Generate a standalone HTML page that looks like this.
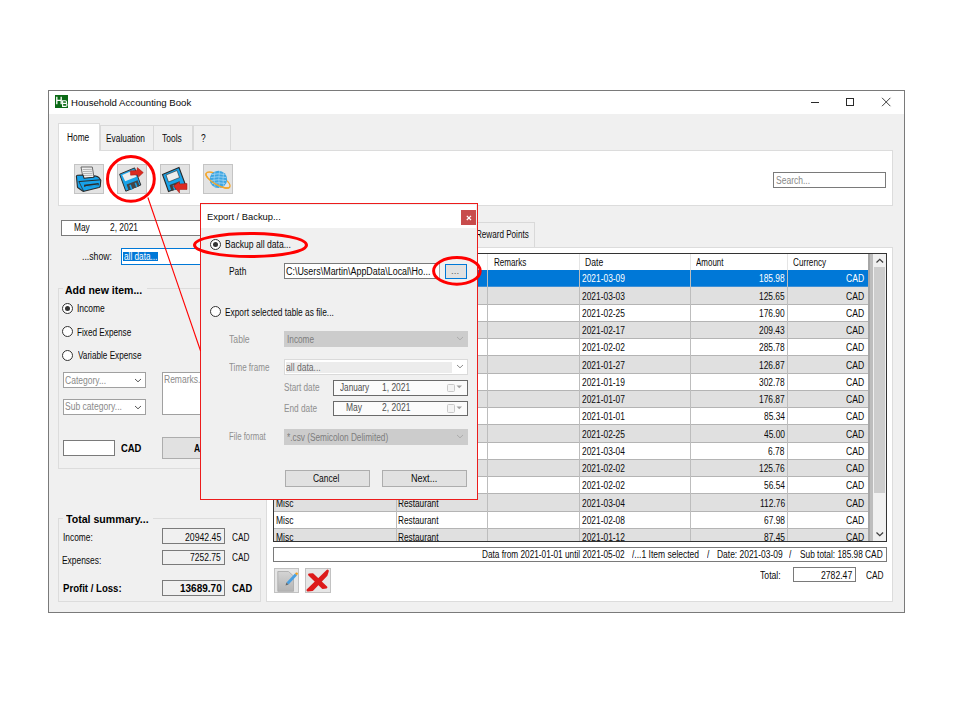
<!DOCTYPE html>
<html><head><meta charset="utf-8">
<style>
*{box-sizing:border-box;margin:0;padding:0}
html,body{width:960px;height:720px;background:#fff;overflow:hidden;position:relative;font-family:"Liberation Sans",sans-serif;color:#000}
.a{position:absolute}
.t{position:absolute;white-space:pre;color:#1a1a1a}
#win{left:48px;top:90px;width:857px;height:523px;border:1px solid #7a7a7a;background:#f0f0f0}
#tb{left:49px;top:91px;width:855px;height:23px;background:#fff}
.tab{position:absolute;background:#f0f0f0;border:1px solid #d9d9d9;border-bottom:none}
.btn{position:absolute;background:#e1e1e1;border:1px solid #adadad}
.inp{position:absolute;background:#fff;border:1px solid #7a7a7a}
.grp{position:absolute;border:1px solid #dcdcdc}
.radio{position:absolute;width:11px;height:11px;border:1px solid #333;border-radius:50%;background:#fff}
.radio.on::after{content:"";position:absolute;left:2px;top:2px;width:5px;height:5px;border-radius:50%;background:#333}
.row{position:absolute;left:274px;width:594px;height:17.25px;border-bottom:1px solid #a0a0a0}
.gl{position:absolute;width:1px;background:#a0a0a0}
</style></head><body>
<div id="win" class="a"></div>
<div id="tb" class="a"></div>
<!-- title icon -->
<div class="a" style="left:55px;top:95px;width:13px;height:13px;background:#0b6a16"></div>
<svg class="a" style="left:55px;top:95px" width="13" height="13" viewBox="0 0 13 13">
<path d="M1.8 1.8V9.2M1.8 5.3H6.2M6.2 1.8V9.2" stroke="#fff" stroke-width="1.3" fill="none"/>
<path d="M7.6 5.8H10.2Q11.6 5.8 11.6 7.2Q11.6 8.4 10.2 8.4H7.6ZM7.6 8.4H10.4Q12 8.4 12 9.9Q12 11.4 10.4 11.4H7.6Z" stroke="#fff" stroke-width="1.1" fill="none"/>
</svg>
<!-- window controls -->
<div class="a" style="left:810.8px;top:101.5px;width:8px;height:1px;background:#2a2a2a"></div>
<div class="a" style="left:845.8px;top:97.8px;width:8.2px;height:8.2px;border:1px solid #2a2a2a"></div>
<svg class="a" style="left:881px;top:97px" width="11" height="11"><path d="M1 0.8L9.4 9.2M9.4 0.8L1 9.2" stroke="#2a2a2a" stroke-width="0.9"/></svg>

<!-- top tabs -->
<div class="a" style="left:58.3px;top:150px;width:835px;height:56px;background:#fff;border:1px solid #dcdcdc"></div>
<div class="tab" style="left:100px;top:124.8px;width:53.5px;height:25.6px"></div>
<div class="tab" style="left:153px;top:124.8px;width:40px;height:25.6px"></div>
<div class="tab" style="left:192.5px;top:124.8px;width:38px;height:25.6px"></div>
<div class="tab" style="left:58.3px;top:123.3px;width:42.2px;height:28px;background:#fff;border-color:#dcdcdc"></div>

<!-- tool buttons -->
<div class="btn" style="left:74px;top:164px;width:30px;height:30px;border-color:#c4c4c4;background:#e3e3e3"></div>
<div class="btn" style="left:117px;top:164px;width:30px;height:30px;border-color:#c4c4c4;background:#e3e3e3"></div>
<div class="btn" style="left:160px;top:164px;width:30px;height:30px;border-color:#c4c4c4;background:#e3e3e3"></div>
<div class="btn" style="left:203px;top:164px;width:30px;height:30px;border-color:#c4c4c4;background:#e3e3e3"></div>
<!-- printer -->
<svg class="a" style="left:74px;top:164px" width="30" height="30" viewBox="0 0 30 30">
<path d="M7 3L18.3 3L20 13.6L9.2 14.7Z" fill="#f2f2f2" stroke="#5a5a5a" stroke-width="0.9"/>
<path d="M8.6 5.5L17.8 5.3M8.9 7.5L18.1 7.3M9.2 9.5L18.4 9.3M9.5 11.5L18.7 11.3" stroke="#a0a0a0" stroke-width="0.8"/>
<path d="M2.4 12.2Q2.5 11.3 3.5 11.2L9 11L10 14.2L19.8 13.2L20.6 11.8L23.5 12.6Q25 13 26.8 16.3L26.2 22.5Q26 23.2 25 23.5L10 27.3Q9.2 27.5 8.6 27L4 23.8Q3.5 23.4 3.4 22.6Z" fill="#17a2ea" stroke="#2b2b2b" stroke-width="1.1" stroke-linejoin="round"/>
<path d="M4.6 17.6L26.6 15.8" stroke="#2b2b2b" stroke-width="1"/>
<path d="M5 17.8L9.6 27.2" stroke="#2b2b2b" stroke-width="0.8"/>
<path d="M10 20.8L24.6 19L24.8 21.2L10.3 23.1Z" fill="#2b2b2b"/>
<path d="M11.3 22.2L23.8 20.6L23.9 21.6L11.5 23.2Z" fill="#17a2ea"/>
</svg>
<!-- export floppy -->
<svg class="a" style="left:117px;top:164px" width="30" height="30" viewBox="0 0 30 30">
<path d="M2.6 10.2L17.6 3.9L23.8 21L8.8 27.2Z" fill="#1aa3e8" stroke="#2f2f2f" stroke-width="1" stroke-linejoin="round"/>
<path d="M5.2 11L15.8 6.6L19.6 12.7L8.2 17.2Z" fill="#ececec"/>
<path d="M9.6 20.6L20.6 16.2L22.6 22L11.6 26.3Z" fill="#454545"/>
<path d="M12.3 21.2L13.8 20.6L15.6 25.4L14.1 26Z" fill="#1aa3e8"/>
<path d="M17.6 19L19 18.4L20.5 22.6L19.1 23.2Z" fill="#1aa3e8"/>
<path d="M13.2 6.8L20 6.6L20.3 3.6L26.3 8.6L21.6 12.9L21 10.8L13.6 11.2Z" fill="#dc2a20" stroke="#a51b14" stroke-width="0.5" stroke-linejoin="round"/>
</svg>
<!-- import floppy -->
<svg class="a" style="left:160px;top:164px" width="30" height="30" viewBox="0 0 30 30">
<path d="M2.5 10.5L19 3.5L25.5 21L8.5 27.5Z" fill="#1aa3e8" stroke="#2a2a2a" stroke-width="1.1"/>
<path d="M6 11L17 6.5L19.5 13.5L8.5 18Z" fill="#ededed" stroke="#2a2a2a" stroke-width="0.6"/>
<path d="M9.5 21L19 17.5L21 24L11.5 27Z" fill="#404040"/>
<path d="M12.5 21.5L14 21L15.5 25.5L14 26Z" fill="#1aa3e8"/>
<path d="M13.5 22L19.5 17.5L19.5 20L27 19.5L27 25.5L19.5 25.5L19.5 29Z" fill="#dd2a22" stroke="#9a1a14" stroke-width="0.5"/>
</svg>
<!-- globe -->
<svg class="a" style="left:203px;top:164px" width="30" height="30" viewBox="0 0 30 30">
<g transform="translate(15 16) rotate(30)"><ellipse cx="0" cy="0" rx="13.6" ry="4.8" fill="none" stroke="#f4a62a" stroke-width="1.3"/></g>
<circle cx="15.4" cy="15.4" r="8.7" fill="#3ea6e2"/>
<path d="M9 10.5Q15.4 9 21.5 10.5M7.8 13.5Q15.4 12 23 13.5M7.8 16.5Q15.4 15 23 16.5M8.8 19.5Q15.4 18 22 19.5" stroke="#a8d8f4" stroke-width="0.8" fill="none"/>
<path d="M12 7.5Q10 15.4 12 23M16.5 6.8Q15 15.4 16.5 24M20.5 8.5Q19.5 15.4 20.5 22" stroke="#a8d8f4" stroke-width="0.6" fill="none"/>
<g transform="translate(15 16) rotate(30)"><path d="M-13.6 0A13.6 4.8 0 0 0 13.6 0" fill="none" stroke="#f4a62a" stroke-width="1.3"/></g>
</svg>

<!-- search -->
<div class="inp" style="left:773px;top:172px;width:113px;height:16px;border-color:#7a7a7a"></div>

<!-- date -->
<div class="inp" style="left:61px;top:220px;width:160px;height:16px"></div>
<div class="inp" style="left:121px;top:248px;width:100px;height:17px;border-color:#0078d7"></div>
<div class="a" style="left:123px;top:251.5px;width:35px;height:9.5px;background:#0078d7"></div>

<!-- add new item group -->
<div class="grp" style="left:58px;top:288px;width:210px;height:181px"></div>
<div class="a" style="left:63px;top:284px;width:84px;height:10px;background:#f0f0f0"></div>
<div class="radio on" style="left:62.2px;top:302.9px"></div>
<div class="radio" style="left:62.2px;top:326.2px"></div>
<div class="radio" style="left:62.2px;top:350.1px"></div>
<div class="inp" style="left:63px;top:372px;width:83px;height:16px;border-color:#a0a0a0"></div>
<svg class="a" style="left:134.4px;top:377.8px" width="8" height="5"><path d="M1 1L4 3.8L7 1" fill="none" stroke="#444" stroke-width="0.9"/></svg>
<div class="inp" style="left:63px;top:399px;width:83px;height:16px;border-color:#a0a0a0"></div>
<svg class="a" style="left:134.4px;top:404.8px" width="8" height="5"><path d="M1 1L4 3.8L7 1" fill="none" stroke="#444" stroke-width="0.9"/></svg>
<div class="inp" style="left:162px;top:372px;width:80px;height:43px;border-color:#a0a0a0"></div>
<div class="inp" style="left:63px;top:440px;width:52px;height:16px"></div>
<div class="btn" style="left:162px;top:437px;width:80px;height:22px"></div>

<!-- total summary group -->
<div class="grp" style="left:58px;top:518px;width:202.8px;height:83.5px"></div>
<div class="a" style="left:63px;top:514px;width:90px;height:10px;background:#f0f0f0"></div>
<div class="inp" style="left:161.5px;top:528px;width:63px;height:16px;background:#f0f0f0"></div>
<div class="inp" style="left:161.5px;top:549.5px;width:63px;height:15px;background:#f0f0f0"></div>
<div class="inp" style="left:161.5px;top:580px;width:63px;height:16px;background:#f0f0f0"></div>

<!-- right tab control -->
<div class="a" style="left:265.5px;top:247px;width:627.5px;height:355px;background:#fff;border:1px solid #dcdcdc"></div>
<div class="tab" style="left:440px;top:222px;width:95px;height:25px"></div>

<!-- table -->
<div id="table" class="a" style="left:273px;top:253px;width:614px;height:288.5px;border:1px solid #333;background:#fff;overflow:hidden"></div>
<div class="a" style="left:274px;top:254.0px;width:594.1px;height:286.5px;overflow:hidden">
<div class="a" style="left:0;top:0;width:594.1px;height:16.0px;background:#fff"></div>
<div class="a" style="left:122.0px;top:0;width:1px;height:16.0px;background:#e5e5e5"></div>
<div class="a" style="left:213.0px;top:0;width:1px;height:16.0px;background:#e5e5e5"></div>
<div class="a" style="left:305.20000000000005px;top:0;width:1px;height:16.0px;background:#e5e5e5"></div>
<div class="a" style="left:415.79999999999995px;top:0;width:1px;height:16.0px;background:#e5e5e5"></div>
<div class="a" style="left:513.2px;top:0;width:1px;height:16.0px;background:#e5e5e5"></div>
<div class="a" style="left:0;top:16.0px;width:594.1px;height:17.25px;background:#0078d7;border-bottom:1px solid #3d8fd6"></div>
<div class="a" style="left:122.0px;top:16.0px;width:1px;height:17.25px;background:#bdbdbd"></div>
<div class="a" style="left:213.0px;top:16.0px;width:1px;height:17.25px;background:#bdbdbd"></div>
<div class="a" style="left:305.20000000000005px;top:16.0px;width:1px;height:17.25px;background:#bdbdbd"></div>
<div class="a" style="left:415.79999999999995px;top:16.0px;width:1px;height:17.25px;background:#bdbdbd"></div>
<div class="a" style="left:513.2px;top:16.0px;width:1px;height:17.25px;background:#bdbdbd"></div>
<div class="a" style="left:0;top:33.25px;width:594.1px;height:17.25px;background:#e0e0e0;border-bottom:1px solid #b4b4b4"></div>
<div class="a" style="left:122.0px;top:33.25px;width:1px;height:17.25px;background:#bdbdbd"></div>
<div class="a" style="left:213.0px;top:33.25px;width:1px;height:17.25px;background:#bdbdbd"></div>
<div class="a" style="left:305.20000000000005px;top:33.25px;width:1px;height:17.25px;background:#bdbdbd"></div>
<div class="a" style="left:415.79999999999995px;top:33.25px;width:1px;height:17.25px;background:#bdbdbd"></div>
<div class="a" style="left:513.2px;top:33.25px;width:1px;height:17.25px;background:#bdbdbd"></div>
<div class="a" style="left:0;top:50.5px;width:594.1px;height:17.25px;background:#fff;border-bottom:1px solid #b4b4b4"></div>
<div class="a" style="left:122.0px;top:50.5px;width:1px;height:17.25px;background:#bdbdbd"></div>
<div class="a" style="left:213.0px;top:50.5px;width:1px;height:17.25px;background:#bdbdbd"></div>
<div class="a" style="left:305.20000000000005px;top:50.5px;width:1px;height:17.25px;background:#bdbdbd"></div>
<div class="a" style="left:415.79999999999995px;top:50.5px;width:1px;height:17.25px;background:#bdbdbd"></div>
<div class="a" style="left:513.2px;top:50.5px;width:1px;height:17.25px;background:#bdbdbd"></div>
<div class="a" style="left:0;top:67.75px;width:594.1px;height:17.25px;background:#e0e0e0;border-bottom:1px solid #b4b4b4"></div>
<div class="a" style="left:122.0px;top:67.75px;width:1px;height:17.25px;background:#bdbdbd"></div>
<div class="a" style="left:213.0px;top:67.75px;width:1px;height:17.25px;background:#bdbdbd"></div>
<div class="a" style="left:305.20000000000005px;top:67.75px;width:1px;height:17.25px;background:#bdbdbd"></div>
<div class="a" style="left:415.79999999999995px;top:67.75px;width:1px;height:17.25px;background:#bdbdbd"></div>
<div class="a" style="left:513.2px;top:67.75px;width:1px;height:17.25px;background:#bdbdbd"></div>
<div class="a" style="left:0;top:85.0px;width:594.1px;height:17.25px;background:#fff;border-bottom:1px solid #b4b4b4"></div>
<div class="a" style="left:122.0px;top:85.0px;width:1px;height:17.25px;background:#bdbdbd"></div>
<div class="a" style="left:213.0px;top:85.0px;width:1px;height:17.25px;background:#bdbdbd"></div>
<div class="a" style="left:305.20000000000005px;top:85.0px;width:1px;height:17.25px;background:#bdbdbd"></div>
<div class="a" style="left:415.79999999999995px;top:85.0px;width:1px;height:17.25px;background:#bdbdbd"></div>
<div class="a" style="left:513.2px;top:85.0px;width:1px;height:17.25px;background:#bdbdbd"></div>
<div class="a" style="left:0;top:102.25px;width:594.1px;height:17.25px;background:#e0e0e0;border-bottom:1px solid #b4b4b4"></div>
<div class="a" style="left:122.0px;top:102.25px;width:1px;height:17.25px;background:#bdbdbd"></div>
<div class="a" style="left:213.0px;top:102.25px;width:1px;height:17.25px;background:#bdbdbd"></div>
<div class="a" style="left:305.20000000000005px;top:102.25px;width:1px;height:17.25px;background:#bdbdbd"></div>
<div class="a" style="left:415.79999999999995px;top:102.25px;width:1px;height:17.25px;background:#bdbdbd"></div>
<div class="a" style="left:513.2px;top:102.25px;width:1px;height:17.25px;background:#bdbdbd"></div>
<div class="a" style="left:0;top:119.5px;width:594.1px;height:17.25px;background:#fff;border-bottom:1px solid #b4b4b4"></div>
<div class="a" style="left:122.0px;top:119.5px;width:1px;height:17.25px;background:#bdbdbd"></div>
<div class="a" style="left:213.0px;top:119.5px;width:1px;height:17.25px;background:#bdbdbd"></div>
<div class="a" style="left:305.20000000000005px;top:119.5px;width:1px;height:17.25px;background:#bdbdbd"></div>
<div class="a" style="left:415.79999999999995px;top:119.5px;width:1px;height:17.25px;background:#bdbdbd"></div>
<div class="a" style="left:513.2px;top:119.5px;width:1px;height:17.25px;background:#bdbdbd"></div>
<div class="a" style="left:0;top:136.75px;width:594.1px;height:17.25px;background:#e0e0e0;border-bottom:1px solid #b4b4b4"></div>
<div class="a" style="left:122.0px;top:136.75px;width:1px;height:17.25px;background:#bdbdbd"></div>
<div class="a" style="left:213.0px;top:136.75px;width:1px;height:17.25px;background:#bdbdbd"></div>
<div class="a" style="left:305.20000000000005px;top:136.75px;width:1px;height:17.25px;background:#bdbdbd"></div>
<div class="a" style="left:415.79999999999995px;top:136.75px;width:1px;height:17.25px;background:#bdbdbd"></div>
<div class="a" style="left:513.2px;top:136.75px;width:1px;height:17.25px;background:#bdbdbd"></div>
<div class="a" style="left:0;top:154.0px;width:594.1px;height:17.25px;background:#fff;border-bottom:1px solid #b4b4b4"></div>
<div class="a" style="left:122.0px;top:154.0px;width:1px;height:17.25px;background:#bdbdbd"></div>
<div class="a" style="left:213.0px;top:154.0px;width:1px;height:17.25px;background:#bdbdbd"></div>
<div class="a" style="left:305.20000000000005px;top:154.0px;width:1px;height:17.25px;background:#bdbdbd"></div>
<div class="a" style="left:415.79999999999995px;top:154.0px;width:1px;height:17.25px;background:#bdbdbd"></div>
<div class="a" style="left:513.2px;top:154.0px;width:1px;height:17.25px;background:#bdbdbd"></div>
<div class="a" style="left:0;top:171.25px;width:594.1px;height:17.25px;background:#e0e0e0;border-bottom:1px solid #b4b4b4"></div>
<div class="a" style="left:122.0px;top:171.25px;width:1px;height:17.25px;background:#bdbdbd"></div>
<div class="a" style="left:213.0px;top:171.25px;width:1px;height:17.25px;background:#bdbdbd"></div>
<div class="a" style="left:305.20000000000005px;top:171.25px;width:1px;height:17.25px;background:#bdbdbd"></div>
<div class="a" style="left:415.79999999999995px;top:171.25px;width:1px;height:17.25px;background:#bdbdbd"></div>
<div class="a" style="left:513.2px;top:171.25px;width:1px;height:17.25px;background:#bdbdbd"></div>
<div class="a" style="left:0;top:188.5px;width:594.1px;height:17.25px;background:#fff;border-bottom:1px solid #b4b4b4"></div>
<div class="a" style="left:122.0px;top:188.5px;width:1px;height:17.25px;background:#bdbdbd"></div>
<div class="a" style="left:213.0px;top:188.5px;width:1px;height:17.25px;background:#bdbdbd"></div>
<div class="a" style="left:305.20000000000005px;top:188.5px;width:1px;height:17.25px;background:#bdbdbd"></div>
<div class="a" style="left:415.79999999999995px;top:188.5px;width:1px;height:17.25px;background:#bdbdbd"></div>
<div class="a" style="left:513.2px;top:188.5px;width:1px;height:17.25px;background:#bdbdbd"></div>
<div class="a" style="left:0;top:205.75px;width:594.1px;height:17.25px;background:#e0e0e0;border-bottom:1px solid #b4b4b4"></div>
<div class="a" style="left:122.0px;top:205.75px;width:1px;height:17.25px;background:#bdbdbd"></div>
<div class="a" style="left:213.0px;top:205.75px;width:1px;height:17.25px;background:#bdbdbd"></div>
<div class="a" style="left:305.20000000000005px;top:205.75px;width:1px;height:17.25px;background:#bdbdbd"></div>
<div class="a" style="left:415.79999999999995px;top:205.75px;width:1px;height:17.25px;background:#bdbdbd"></div>
<div class="a" style="left:513.2px;top:205.75px;width:1px;height:17.25px;background:#bdbdbd"></div>
<div class="a" style="left:0;top:223.0px;width:594.1px;height:17.25px;background:#fff;border-bottom:1px solid #b4b4b4"></div>
<div class="a" style="left:122.0px;top:223.0px;width:1px;height:17.25px;background:#bdbdbd"></div>
<div class="a" style="left:213.0px;top:223.0px;width:1px;height:17.25px;background:#bdbdbd"></div>
<div class="a" style="left:305.20000000000005px;top:223.0px;width:1px;height:17.25px;background:#bdbdbd"></div>
<div class="a" style="left:415.79999999999995px;top:223.0px;width:1px;height:17.25px;background:#bdbdbd"></div>
<div class="a" style="left:513.2px;top:223.0px;width:1px;height:17.25px;background:#bdbdbd"></div>
<div class="a" style="left:0;top:240.25px;width:594.1px;height:17.25px;background:#e0e0e0;border-bottom:1px solid #b4b4b4"></div>
<div class="a" style="left:122.0px;top:240.25px;width:1px;height:17.25px;background:#bdbdbd"></div>
<div class="a" style="left:213.0px;top:240.25px;width:1px;height:17.25px;background:#bdbdbd"></div>
<div class="a" style="left:305.20000000000005px;top:240.25px;width:1px;height:17.25px;background:#bdbdbd"></div>
<div class="a" style="left:415.79999999999995px;top:240.25px;width:1px;height:17.25px;background:#bdbdbd"></div>
<div class="a" style="left:513.2px;top:240.25px;width:1px;height:17.25px;background:#bdbdbd"></div>
<div class="a" style="left:0;top:257.5px;width:594.1px;height:17.25px;background:#fff;border-bottom:1px solid #b4b4b4"></div>
<div class="a" style="left:122.0px;top:257.5px;width:1px;height:17.25px;background:#bdbdbd"></div>
<div class="a" style="left:213.0px;top:257.5px;width:1px;height:17.25px;background:#bdbdbd"></div>
<div class="a" style="left:305.20000000000005px;top:257.5px;width:1px;height:17.25px;background:#bdbdbd"></div>
<div class="a" style="left:415.79999999999995px;top:257.5px;width:1px;height:17.25px;background:#bdbdbd"></div>
<div class="a" style="left:513.2px;top:257.5px;width:1px;height:17.25px;background:#bdbdbd"></div>
<div class="a" style="left:0;top:274.75px;width:594.1px;height:17.25px;background:#e0e0e0;border-bottom:1px solid #b4b4b4"></div>
<div class="a" style="left:122.0px;top:274.75px;width:1px;height:17.25px;background:#bdbdbd"></div>
<div class="a" style="left:213.0px;top:274.75px;width:1px;height:17.25px;background:#bdbdbd"></div>
<div class="a" style="left:305.20000000000005px;top:274.75px;width:1px;height:17.25px;background:#bdbdbd"></div>
<div class="a" style="left:415.79999999999995px;top:274.75px;width:1px;height:17.25px;background:#bdbdbd"></div>
<div class="a" style="left:513.2px;top:274.75px;width:1px;height:17.25px;background:#bdbdbd"></div>
<div class="t" style="left:308.08px;top:20.40px;font-size:10px;line-height:10px;color:#ffffff;transform:scaleX(0.8398);transform-origin:0 0">2021-03-09</div>
<div class="t" style="left:484.90px;top:20.40px;font-size:10px;line-height:10px;color:#ffffff;transform:scaleX(0.8398);transform-origin:0 0">185.98</div>
<div class="t" style="left:572.17px;top:20.40px;font-size:10px;line-height:10px;color:#ffffff;transform:scaleX(0.8593);transform-origin:0 0">CAD</div>
<div class="t" style="left:308.08px;top:37.65px;font-size:10px;line-height:10px;color:#0a0a0a;transform:scaleX(0.8398);transform-origin:0 0">2021-03-03</div>
<div class="t" style="left:484.90px;top:37.65px;font-size:10px;line-height:10px;color:#0a0a0a;transform:scaleX(0.8398);transform-origin:0 0">125.65</div>
<div class="t" style="left:572.17px;top:37.65px;font-size:10px;line-height:10px;color:#0a0a0a;transform:scaleX(0.8593);transform-origin:0 0">CAD</div>
<div class="t" style="left:308.08px;top:54.90px;font-size:10px;line-height:10px;color:#0a0a0a;transform:scaleX(0.8398);transform-origin:0 0">2021-02-25</div>
<div class="t" style="left:484.90px;top:54.90px;font-size:10px;line-height:10px;color:#0a0a0a;transform:scaleX(0.8398);transform-origin:0 0">176.90</div>
<div class="t" style="left:572.17px;top:54.90px;font-size:10px;line-height:10px;color:#0a0a0a;transform:scaleX(0.8593);transform-origin:0 0">CAD</div>
<div class="t" style="left:308.08px;top:72.15px;font-size:10px;line-height:10px;color:#0a0a0a;transform:scaleX(0.8398);transform-origin:0 0">2021-02-17</div>
<div class="t" style="left:484.90px;top:72.15px;font-size:10px;line-height:10px;color:#0a0a0a;transform:scaleX(0.8398);transform-origin:0 0">209.43</div>
<div class="t" style="left:572.17px;top:72.15px;font-size:10px;line-height:10px;color:#0a0a0a;transform:scaleX(0.8593);transform-origin:0 0">CAD</div>
<div class="t" style="left:308.08px;top:89.40px;font-size:10px;line-height:10px;color:#0a0a0a;transform:scaleX(0.8398);transform-origin:0 0">2021-02-02</div>
<div class="t" style="left:484.90px;top:89.40px;font-size:10px;line-height:10px;color:#0a0a0a;transform:scaleX(0.8398);transform-origin:0 0">285.78</div>
<div class="t" style="left:572.17px;top:89.40px;font-size:10px;line-height:10px;color:#0a0a0a;transform:scaleX(0.8593);transform-origin:0 0">CAD</div>
<div class="t" style="left:308.08px;top:106.65px;font-size:10px;line-height:10px;color:#0a0a0a;transform:scaleX(0.8398);transform-origin:0 0">2021-01-27</div>
<div class="t" style="left:484.90px;top:106.65px;font-size:10px;line-height:10px;color:#0a0a0a;transform:scaleX(0.8398);transform-origin:0 0">126.87</div>
<div class="t" style="left:572.17px;top:106.65px;font-size:10px;line-height:10px;color:#0a0a0a;transform:scaleX(0.8593);transform-origin:0 0">CAD</div>
<div class="t" style="left:308.08px;top:123.90px;font-size:10px;line-height:10px;color:#0a0a0a;transform:scaleX(0.8398);transform-origin:0 0">2021-01-19</div>
<div class="t" style="left:484.90px;top:123.90px;font-size:10px;line-height:10px;color:#0a0a0a;transform:scaleX(0.8398);transform-origin:0 0">302.78</div>
<div class="t" style="left:572.17px;top:123.90px;font-size:10px;line-height:10px;color:#0a0a0a;transform:scaleX(0.8593);transform-origin:0 0">CAD</div>
<div class="t" style="left:308.08px;top:141.15px;font-size:10px;line-height:10px;color:#0a0a0a;transform:scaleX(0.8398);transform-origin:0 0">2021-01-07</div>
<div class="t" style="left:484.90px;top:141.15px;font-size:10px;line-height:10px;color:#0a0a0a;transform:scaleX(0.8398);transform-origin:0 0">176.87</div>
<div class="t" style="left:572.17px;top:141.15px;font-size:10px;line-height:10px;color:#0a0a0a;transform:scaleX(0.8593);transform-origin:0 0">CAD</div>
<div class="t" style="left:308.08px;top:158.40px;font-size:10px;line-height:10px;color:#0a0a0a;transform:scaleX(0.8398);transform-origin:0 0">2021-01-01</div>
<div class="t" style="left:489.51px;top:158.40px;font-size:10px;line-height:10px;color:#0a0a0a;transform:scaleX(0.8398);transform-origin:0 0">85.34</div>
<div class="t" style="left:572.17px;top:158.40px;font-size:10px;line-height:10px;color:#0a0a0a;transform:scaleX(0.8593);transform-origin:0 0">CAD</div>
<div class="t" style="left:308.08px;top:175.65px;font-size:10px;line-height:10px;color:#0a0a0a;transform:scaleX(0.8398);transform-origin:0 0">2021-02-25</div>
<div class="t" style="left:489.51px;top:175.65px;font-size:10px;line-height:10px;color:#0a0a0a;transform:scaleX(0.8398);transform-origin:0 0">45.00</div>
<div class="t" style="left:572.17px;top:175.65px;font-size:10px;line-height:10px;color:#0a0a0a;transform:scaleX(0.8593);transform-origin:0 0">CAD</div>
<div class="t" style="left:308.08px;top:192.90px;font-size:10px;line-height:10px;color:#0a0a0a;transform:scaleX(0.8398);transform-origin:0 0">2021-03-04</div>
<div class="t" style="left:494.34px;top:192.90px;font-size:10px;line-height:10px;color:#0a0a0a;transform:scaleX(0.8398);transform-origin:0 0">6.78</div>
<div class="t" style="left:572.17px;top:192.90px;font-size:10px;line-height:10px;color:#0a0a0a;transform:scaleX(0.8593);transform-origin:0 0">CAD</div>
<div class="t" style="left:308.08px;top:210.15px;font-size:10px;line-height:10px;color:#0a0a0a;transform:scaleX(0.8398);transform-origin:0 0">2021-02-02</div>
<div class="t" style="left:484.90px;top:210.15px;font-size:10px;line-height:10px;color:#0a0a0a;transform:scaleX(0.8398);transform-origin:0 0">125.76</div>
<div class="t" style="left:572.17px;top:210.15px;font-size:10px;line-height:10px;color:#0a0a0a;transform:scaleX(0.8593);transform-origin:0 0">CAD</div>
<div class="t" style="left:308.08px;top:227.40px;font-size:10px;line-height:10px;color:#0a0a0a;transform:scaleX(0.8398);transform-origin:0 0">2021-02-02</div>
<div class="t" style="left:489.51px;top:227.40px;font-size:10px;line-height:10px;color:#0a0a0a;transform:scaleX(0.8398);transform-origin:0 0">56.54</div>
<div class="t" style="left:572.17px;top:227.40px;font-size:10px;line-height:10px;color:#0a0a0a;transform:scaleX(0.8593);transform-origin:0 0">CAD</div>
<div class="t" style="left:308.08px;top:244.65px;font-size:10px;line-height:10px;color:#0a0a0a;transform:scaleX(0.8398);transform-origin:0 0">2021-03-04</div>
<div class="t" style="left:485.53px;top:244.65px;font-size:10px;line-height:10px;color:#0a0a0a;transform:scaleX(0.8398);transform-origin:0 0">112.76</div>
<div class="t" style="left:572.17px;top:244.65px;font-size:10px;line-height:10px;color:#0a0a0a;transform:scaleX(0.8593);transform-origin:0 0">CAD</div>
<div class="t" style="left:2.37px;top:244.65px;font-size:10px;line-height:10px;color:#0a0a0a;transform:scaleX(0.8462);transform-origin:0 0">Misc</div>
<div class="t" style="left:124.48px;top:244.65px;font-size:10px;line-height:10px;color:#0a0a0a;transform:scaleX(0.8269);transform-origin:0 0">Restaurant</div>
<div class="t" style="left:308.08px;top:261.90px;font-size:10px;line-height:10px;color:#0a0a0a;transform:scaleX(0.8398);transform-origin:0 0">2021-02-08</div>
<div class="t" style="left:489.51px;top:261.90px;font-size:10px;line-height:10px;color:#0a0a0a;transform:scaleX(0.8398);transform-origin:0 0">67.98</div>
<div class="t" style="left:572.17px;top:261.90px;font-size:10px;line-height:10px;color:#0a0a0a;transform:scaleX(0.8593);transform-origin:0 0">CAD</div>
<div class="t" style="left:2.37px;top:261.90px;font-size:10px;line-height:10px;color:#0a0a0a;transform:scaleX(0.8462);transform-origin:0 0">Misc</div>
<div class="t" style="left:124.48px;top:261.90px;font-size:10px;line-height:10px;color:#0a0a0a;transform:scaleX(0.8269);transform-origin:0 0">Restaurant</div>
<div class="t" style="left:308.08px;top:279.15px;font-size:10px;line-height:10px;color:#0a0a0a;transform:scaleX(0.8398);transform-origin:0 0">2021-01-12</div>
<div class="t" style="left:489.51px;top:279.15px;font-size:10px;line-height:10px;color:#0a0a0a;transform:scaleX(0.8398);transform-origin:0 0">87.45</div>
<div class="t" style="left:572.17px;top:279.15px;font-size:10px;line-height:10px;color:#0a0a0a;transform:scaleX(0.8593);transform-origin:0 0">CAD</div>
<div class="t" style="left:2.37px;top:279.15px;font-size:10px;line-height:10px;color:#0a0a0a;transform:scaleX(0.8462);transform-origin:0 0">Misc</div>
<div class="t" style="left:124.48px;top:279.15px;font-size:10px;line-height:10px;color:#0a0a0a;transform:scaleX(0.8269);transform-origin:0 0">Restaurant</div>
</div>

<!-- scrollbar -->
<div class="a" style="left:868px;top:254px;width:2px;height:286.5px;background:#a6a6a6"></div>
<div class="a" style="left:870px;top:254px;width:2.5px;height:286.5px;background:#bdbdbd"></div>
<div class="a" style="left:872.5px;top:254px;width:13.5px;height:286.5px;background:#f0f0f0"></div>
<div class="a" style="left:874px;top:267px;width:11px;height:226px;background:#cdcdcd"></div>
<svg class="a" style="left:875px;top:257px" width="10" height="8"><path d="M1.5 5.5L4.8 2.3L8.1 5.5" fill="none" stroke="#404040" stroke-width="1.3"/></svg>
<svg class="a" style="left:875px;top:530px" width="10" height="8"><path d="M1.5 2.5L4.8 5.7L8.1 2.5" fill="none" stroke="#404040" stroke-width="1.3"/></svg>
<!-- status -->
<div class="a" style="left:273px;top:546.5px;width:613.5px;height:15.5px;border:1px solid #7a7a7a;background:#fff"></div>
<div class="inp" style="left:793px;top:567px;width:62.5px;height:15px"></div>
<div class="btn" style="left:273.8px;top:567.5px;width:25.5px;height:25.8px;border-color:#c2c2c2;background:#e6e6e6"></div>
<div class="btn" style="left:305px;top:567.5px;width:25.8px;height:25.8px;border-color:#c2c2c2;background:#e6e6e6"></div>
<svg class="a" style="left:273.8px;top:567.5px" width="26" height="26" viewBox="0 0 26 26">
<defs><linearGradient id="dg" x1="0" y1="0" x2="0" y2="1"><stop offset="0" stop-color="#d4d4d4"/><stop offset="1" stop-color="#b4b4b4"/></linearGradient></defs>
<path d="M3.8 3.5L14.5 3.5L19.5 8L19.5 23.3L3.8 23.3Z" fill="url(#dg)" stroke="#a8a8a8" stroke-width="0.8"/>
<path d="M12.5 14.5L21 5.5L23 7.5L14.5 16.5Z" fill="#4a9fe0"/>
<path d="M21 5.5L22 4.5Q23.5 4 24 5.5L23 7.5Z" fill="#f0a020"/>
<path d="M12.5 14.5L14.5 16.5L11.5 17.5Z" fill="#666"/>
</svg>
<svg class="a" style="left:305px;top:567.5px" width="26" height="26" viewBox="0 0 26 26">
<path d="M2.8 22.3L22.5 3L21.2 7.2L7.4 21.6Z" fill="#dd1a1a" stroke="#dd1a1a" stroke-width="2.6" stroke-linejoin="round"/>
<path d="M4.2 6.6L7.6 6.3L21.3 19.3L17.6 19.8Z" fill="#dd1a1a" stroke="#dd1a1a" stroke-width="2.2" stroke-linejoin="round"/>
</svg>

<div class="t" style="left:71.15px;top:98.10px;font-size:9.6px;line-height:9.6px;color:#0a0a0a;transform:scaleX(1.0021);transform-origin:0 0">Household&#32;Accounting&#32;Book</div>
<div class="t" style="left:66.88px;top:132.90px;font-size:10px;line-height:10px;color:#0a0a0a;transform:scaleX(0.8314);transform-origin:0 0">Home</div>
<div class="t" style="left:106.37px;top:134.20px;font-size:10px;line-height:10px;color:#0a0a0a;transform:scaleX(0.8352);transform-origin:0 0">Evaluation</div>
<div class="t" style="left:161.79px;top:134.20px;font-size:10px;line-height:10px;color:#0a0a0a;transform:scaleX(0.8484);transform-origin:0 0">Tools</div>
<div class="t" style="left:200.59px;top:134.20px;font-size:10px;line-height:10px;color:#0a0a0a;transform:scaleX(0.8400);transform-origin:0 0">?</div>
<div class="t" style="left:775.57px;top:175.60px;font-size:10px;line-height:10px;color:#8a8a8a;transform:scaleX(0.8516);transform-origin:0 0">Search...</div>
<div class="t" style="left:74.12px;top:223.30px;font-size:10px;line-height:10px;color:#0a0a0a;transform:scaleX(0.8356);transform-origin:0 0">May</div>
<div class="t" style="left:109.58px;top:223.30px;font-size:10px;line-height:10px;color:#0a0a0a;transform:scaleX(0.8385);transform-origin:0 0">2,&#32;2021</div>
<div class="t" style="left:81.85px;top:251.65px;font-size:10px;line-height:10px;color:#0a0a0a;transform:scaleX(0.8712);transform-origin:0 0">...show:</div>
<div class="t" style="left:124.19px;top:251.65px;font-size:10px;line-height:10px;color:#ffffff;transform:scaleX(0.8228);transform-origin:0 0">all&#32;data...</div>
<div class="t" style="left:65.34px;top:285.50px;font-size:10px;line-height:10px;color:#000;transform:scaleX(1.0524);transform-origin:0 0;font-weight:bold">Add&#32;new&#32;item...</div>
<div class="t" style="left:77.16px;top:304.20px;font-size:10px;line-height:10px;color:#0a0a0a;transform:scaleX(0.8472);transform-origin:0 0">Income</div>
<div class="t" style="left:77.19px;top:327.70px;font-size:10px;line-height:10px;color:#0a0a0a;transform:scaleX(0.8200);transform-origin:0 0">Fixed&#32;Expense</div>
<div class="t" style="left:78.00px;top:351.10px;font-size:10px;line-height:10px;color:#0a0a0a;transform:scaleX(0.8168);transform-origin:0 0">Variable&#32;Expense</div>
<div class="t" style="left:64.57px;top:375.80px;font-size:10px;line-height:10px;color:#8a8a8a;transform:scaleX(0.8535);transform-origin:0 0">Category...</div>
<div class="t" style="left:65.07px;top:402.40px;font-size:10px;line-height:10px;color:#8a8a8a;transform:scaleX(0.8552);transform-origin:0 0">Sub&#32;category...</div>
<div class="t" style="left:163.61px;top:375.40px;font-size:10px;line-height:10px;color:#8a8a8a;transform:scaleX(0.8500);transform-origin:0 0">Remarks...</div>
<div class="t" style="left:121.06px;top:443.80px;font-size:10px;line-height:10px;color:#000;transform:scaleX(0.9429);transform-origin:0 0;font-weight:bold">CAD</div>
<div class="t" style="left:194.49px;top:443.80px;font-size:10px;line-height:10px;color:#000;transform:scaleX(0.8500);transform-origin:0 0;font-weight:bold">Add</div>
<div class="t" style="left:65.90px;top:515.30px;font-size:10px;line-height:10px;color:#000;transform:scaleX(1.0594);transform-origin:0 0;font-weight:bold">Total&#32;summary...</div>
<div class="t" style="left:62.57px;top:532.60px;font-size:10px;line-height:10px;color:#0a0a0a;transform:scaleX(0.8382);transform-origin:0 0">Income:</div>
<div class="t" style="left:185.07px;top:532.60px;font-size:10px;line-height:10px;color:#0a0a0a;transform:scaleX(0.8687);transform-origin:0 0">20942.45</div>
<div class="t" style="left:232.19px;top:532.60px;font-size:10px;line-height:10px;color:#0a0a0a;transform:scaleX(0.8247);transform-origin:0 0">CAD</div>
<div class="t" style="left:62.17px;top:555.80px;font-size:10px;line-height:10px;color:#0a0a0a;transform:scaleX(0.8420);transform-origin:0 0">Expenses:</div>
<div class="t" style="left:190.47px;top:553.40px;font-size:10px;line-height:10px;color:#0a0a0a;transform:scaleX(0.8511);transform-origin:0 0">7252.75</div>
<div class="t" style="left:232.19px;top:553.40px;font-size:10px;line-height:10px;color:#0a0a0a;transform:scaleX(0.8247);transform-origin:0 0">CAD</div>
<div class="t" style="left:62.72px;top:583.65px;font-size:10px;line-height:10px;color:#000;transform:scaleX(0.9590);transform-origin:0 0;font-weight:bold">Profit&#32;/&#32;Loss:</div>
<div class="t" style="left:180.00px;top:583.65px;font-size:10px;line-height:10px;color:#000;transform:scaleX(1.0000);transform-origin:0 0;font-weight:bold">13689.70</div>
<div class="t" style="left:232.37px;top:583.65px;font-size:10px;line-height:10px;color:#000;transform:scaleX(0.9333);transform-origin:0 0;font-weight:bold">CAD</div>
<div class="t" style="left:475.99px;top:230.30px;font-size:10px;line-height:10px;color:#0a0a0a;transform:scaleX(0.8109);transform-origin:0 0">Reward&#32;Points</div>
<div class="t" style="left:493.59px;top:258.10px;font-size:10px;line-height:10px;color:#0a0a0a;transform:scaleX(0.8103);transform-origin:0 0">Remarks</div>
<div class="t" style="left:585.15px;top:258.10px;font-size:10px;line-height:10px;color:#0a0a0a;transform:scaleX(0.8600);transform-origin:0 0">Date</div>
<div class="t" style="left:696.00px;top:258.10px;font-size:10px;line-height:10px;color:#0a0a0a;transform:scaleX(0.7971);transform-origin:0 0">Amount</div>
<div class="t" style="left:792.99px;top:258.10px;font-size:10px;line-height:10px;color:#0a0a0a;transform:scaleX(0.8150);transform-origin:0 0">Currency</div>
<div class="t" style="left:482.08px;top:550.30px;font-size:10px;line-height:10px;color:#0a0a0a;transform:scaleX(0.8250);transform-origin:0 0">Data&#32;from&#32;2021-01-01&#32;until&#32;2021-05-02</div>
<div class="t" style="left:631.60px;top:550.30px;font-size:10px;line-height:10px;color:#0a0a0a;transform:scaleX(0.8497);transform-origin:0 0">/...1&#32;Item&#32;selected</div>
<div class="t" style="left:706.60px;top:550.30px;font-size:10px;line-height:10px;color:#0a0a0a;transform:scaleX(0.8500);transform-origin:0 0">/</div>
<div class="t" style="left:716.67px;top:550.30px;font-size:10px;line-height:10px;color:#0a0a0a;transform:scaleX(0.8443);transform-origin:0 0">Date:&#32;2021-03-09</div>
<div class="t" style="left:789.10px;top:550.30px;font-size:10px;line-height:10px;color:#0a0a0a;transform:scaleX(0.8500);transform-origin:0 0">/</div>
<div class="t" style="left:799.58px;top:550.30px;font-size:10px;line-height:10px;color:#0a0a0a;transform:scaleX(0.8304);transform-origin:0 0">Sub&#32;total:&#32;185.98&#32;CAD</div>
<div class="t" style="left:759.98px;top:571.00px;font-size:10px;line-height:10px;color:#0a0a0a;transform:scaleX(0.8659);transform-origin:0 0">Total:</div>
<div class="t" style="left:820.77px;top:571.00px;font-size:10px;line-height:10px;color:#0a0a0a;transform:scaleX(0.8624);transform-origin:0 0">2782.47</div>
<div class="t" style="left:865.79px;top:571.00px;font-size:10px;line-height:10px;color:#0a0a0a;transform:scaleX(0.8296);transform-origin:0 0">CAD</div>
<!-- dialog -->
<div class="a" style="left:199.7px;top:203.1px;width:278.3px;height:296.6px;border:1.6px solid #ec1c1c;background:#f0f0f0"></div>
<div class="a" style="left:201.3px;top:204.7px;width:275.1px;height:23px;background:#fff"></div>
<div class="a" style="left:461.2px;top:210.2px;width:14.7px;height:14.7px;background:#c84c4c"></div>
<svg class="a" style="left:466px;top:214.8px" width="6" height="6"><path d="M0.8 0.8L5 5M5 0.8L0.8 5" fill="none" stroke="#fff" stroke-width="1.2"/></svg>
<div class="radio on" style="left:209.8px;top:238.8px"></div>
<div class="inp" style="left:284px;top:262.5px;width:156px;height:16px;border-color:#7a7a7a"></div>
<div class="a" style="left:438.6px;top:263.5px;width:1.2px;height:14px;background:#a8a8a8"></div>
<div class="btn" style="left:445px;top:264px;width:21.5px;height:14.5px;border-color:#0078d7"></div>
<div class="radio" style="left:209.8px;top:306px"></div>
<div class="a" style="left:284px;top:331px;width:183.5px;height:15.7px;background:#cccccc"></div>
<svg class="a" style="left:456.4px;top:336.4px" width="8" height="5"><path d="M1 1L4 3.8L7 1" fill="none" stroke="#a8a8a8" stroke-width="0.9"/></svg>
<div class="a" style="left:284px;top:359.4px;width:183.5px;height:15.6px;background:#fff;border:1px solid #dadada"></div>
<div class="a" style="left:285.5px;top:361.5px;width:166px;height:11.2px;background:#ececec"></div>
<svg class="a" style="left:456.4px;top:364.0px" width="8" height="5"><path d="M1 1L4 3.8L7 1" fill="none" stroke="#808080" stroke-width="0.9"/></svg>
<div class="a" style="left:333px;top:380.2px;width:134.5px;height:15.6px;background:#fbfbfb;border:1px solid #6a6a6a"></div>
<div class="a" style="left:446.5px;top:383.7px;width:8px;height:8.6px;background:#f4f4f4;border:1px solid #c9c9c9;border-radius:1.5px"></div>
<svg class="a" style="left:456px;top:385px" width="7" height="4"><path d="M0.5 0.5L6 0.5L3.25 3.2Z" fill="#a0a0a0"/></svg>
<div class="a" style="left:333px;top:400.5px;width:134.5px;height:15.5px;background:#fbfbfb;border:1px solid #6a6a6a"></div>
<div class="a" style="left:446.5px;top:404px;width:8px;height:8.6px;background:#f4f4f4;border:1px solid #c9c9c9;border-radius:1.5px"></div>
<svg class="a" style="left:456px;top:405.5px" width="7" height="4"><path d="M0.5 0.5L6 0.5L3.25 3.2Z" fill="#a0a0a0"/></svg>
<div class="a" style="left:284px;top:428.8px;width:183.5px;height:16px;background:#cccccc"></div>
<svg class="a" style="left:456.4px;top:433.8px" width="8" height="5"><path d="M1 1L4 3.8L7 1" fill="none" stroke="#a8a8a8" stroke-width="0.9"/></svg>
<div class="btn" style="left:285px;top:469.5px;width:84.5px;height:17.5px"></div>
<div class="btn" style="left:382px;top:469.5px;width:85px;height:17.5px"></div>
<div class="t" style="left:206.96px;top:212.10px;font-size:9.5px;line-height:9.5px;color:#0a0a0a;transform:scaleX(0.9837);transform-origin:0 0">Export&#32;/&#32;Backup...</div>
<div class="t" style="left:224.96px;top:240.10px;font-size:10px;line-height:10px;color:#0a0a0a;transform:scaleX(0.8585);transform-origin:0 0">Backup&#32;all&#32;data...</div>
<div class="t" style="left:228.87px;top:266.80px;font-size:10px;line-height:10px;color:#0a0a0a;transform:scaleX(0.8416);transform-origin:0 0">Path</div>
<div class="t" style="left:285.80px;top:266.90px;font-size:10px;line-height:10px;color:#0a0a0a;transform:scaleX(0.8928);transform-origin:0 0">C:\Users\Martin\AppData\Local\Ho...</div>
<div class="t" style="left:224.88px;top:308.10px;font-size:10px;line-height:10px;color:#0a0a0a;transform:scaleX(0.8326);transform-origin:0 0">Export&#32;selected&#32;table&#32;as&#32;file...</div>
<div class="t" style="left:229.38px;top:334.70px;font-size:10px;line-height:10px;color:#8f8f8f;transform:scaleX(0.8645);transform-origin:0 0">Table</div>
<div class="t" style="left:286.98px;top:335.10px;font-size:10px;line-height:10px;color:#7d7d7d;transform:scaleX(0.8252);transform-origin:0 0">Income</div>
<div class="t" style="left:229.40px;top:362.50px;font-size:10px;line-height:10px;color:#8f8f8f;transform:scaleX(0.8061);transform-origin:0 0">Time&#32;frame</div>
<div class="t" style="left:285.79px;top:362.50px;font-size:10px;line-height:10px;color:#6a6a6a;transform:scaleX(0.8557);transform-origin:0 0">all&#32;data...</div>
<div class="t" style="left:284.19px;top:383.40px;font-size:10px;line-height:10px;color:#8f8f8f;transform:scaleX(0.8188);transform-origin:0 0">Start&#32;date</div>
<div class="t" style="left:340.00px;top:382.60px;font-size:10px;line-height:10px;color:#505050;transform:scaleX(0.8197);transform-origin:0 0">January</div>
<div class="t" style="left:381.77px;top:382.60px;font-size:10px;line-height:10px;color:#505050;transform:scaleX(0.8465);transform-origin:0 0">1,&#32;2021</div>
<div class="t" style="left:283.98px;top:403.60px;font-size:10px;line-height:10px;color:#8f8f8f;transform:scaleX(0.8256);transform-origin:0 0">End&#32;date</div>
<div class="t" style="left:346.06px;top:403.20px;font-size:10px;line-height:10px;color:#505050;transform:scaleX(0.8493);transform-origin:0 0">May</div>
<div class="t" style="left:381.57px;top:403.20px;font-size:10px;line-height:10px;color:#505050;transform:scaleX(0.8523);transform-origin:0 0">2,&#32;2021</div>
<div class="t" style="left:229.02px;top:432.40px;font-size:10px;line-height:10px;color:#8f8f8f;transform:scaleX(0.7785);transform-origin:0 0">File&#32;format</div>
<div class="t" style="left:287.39px;top:432.70px;font-size:10px;line-height:10px;color:#7d7d7d;transform:scaleX(0.8272);transform-origin:0 0">*.csv&#32;(Semicolon&#32;Delimited)</div>
<div class="t" style="left:451.19px;top:266.60px;font-size:9px;line-height:9px;color:#606060;transform:scaleX(1.0833);transform-origin:0 0">...</div>
<div class="t" style="left:313.28px;top:474.30px;font-size:10px;line-height:10px;color:#0a0a0a;transform:scaleX(0.8433);transform-origin:0 0">Cancel</div>
<div class="t" style="left:411.02px;top:474.30px;font-size:10px;line-height:10px;color:#0a0a0a;transform:scaleX(0.9064);transform-origin:0 0">Next...</div>
<!-- annotations -->
<svg class="a" style="left:0;top:0" width="960" height="720">
<line x1="147.9" y1="197.5" x2="200.6" y2="351" stroke="#ff0000" stroke-width="1.1"/>
<ellipse cx="130.9" cy="178.9" rx="23.4" ry="22.4" fill="none" stroke="#ff0000" stroke-width="3"/>
<ellipse cx="250.5" cy="245" rx="56" ry="11.5" fill="none" stroke="#ff0000" stroke-width="3"/>
<ellipse cx="456.9" cy="270.9" rx="23.3" ry="13.3" fill="none" stroke="#ff0000" stroke-width="3"/>
</svg>
</body></html>
